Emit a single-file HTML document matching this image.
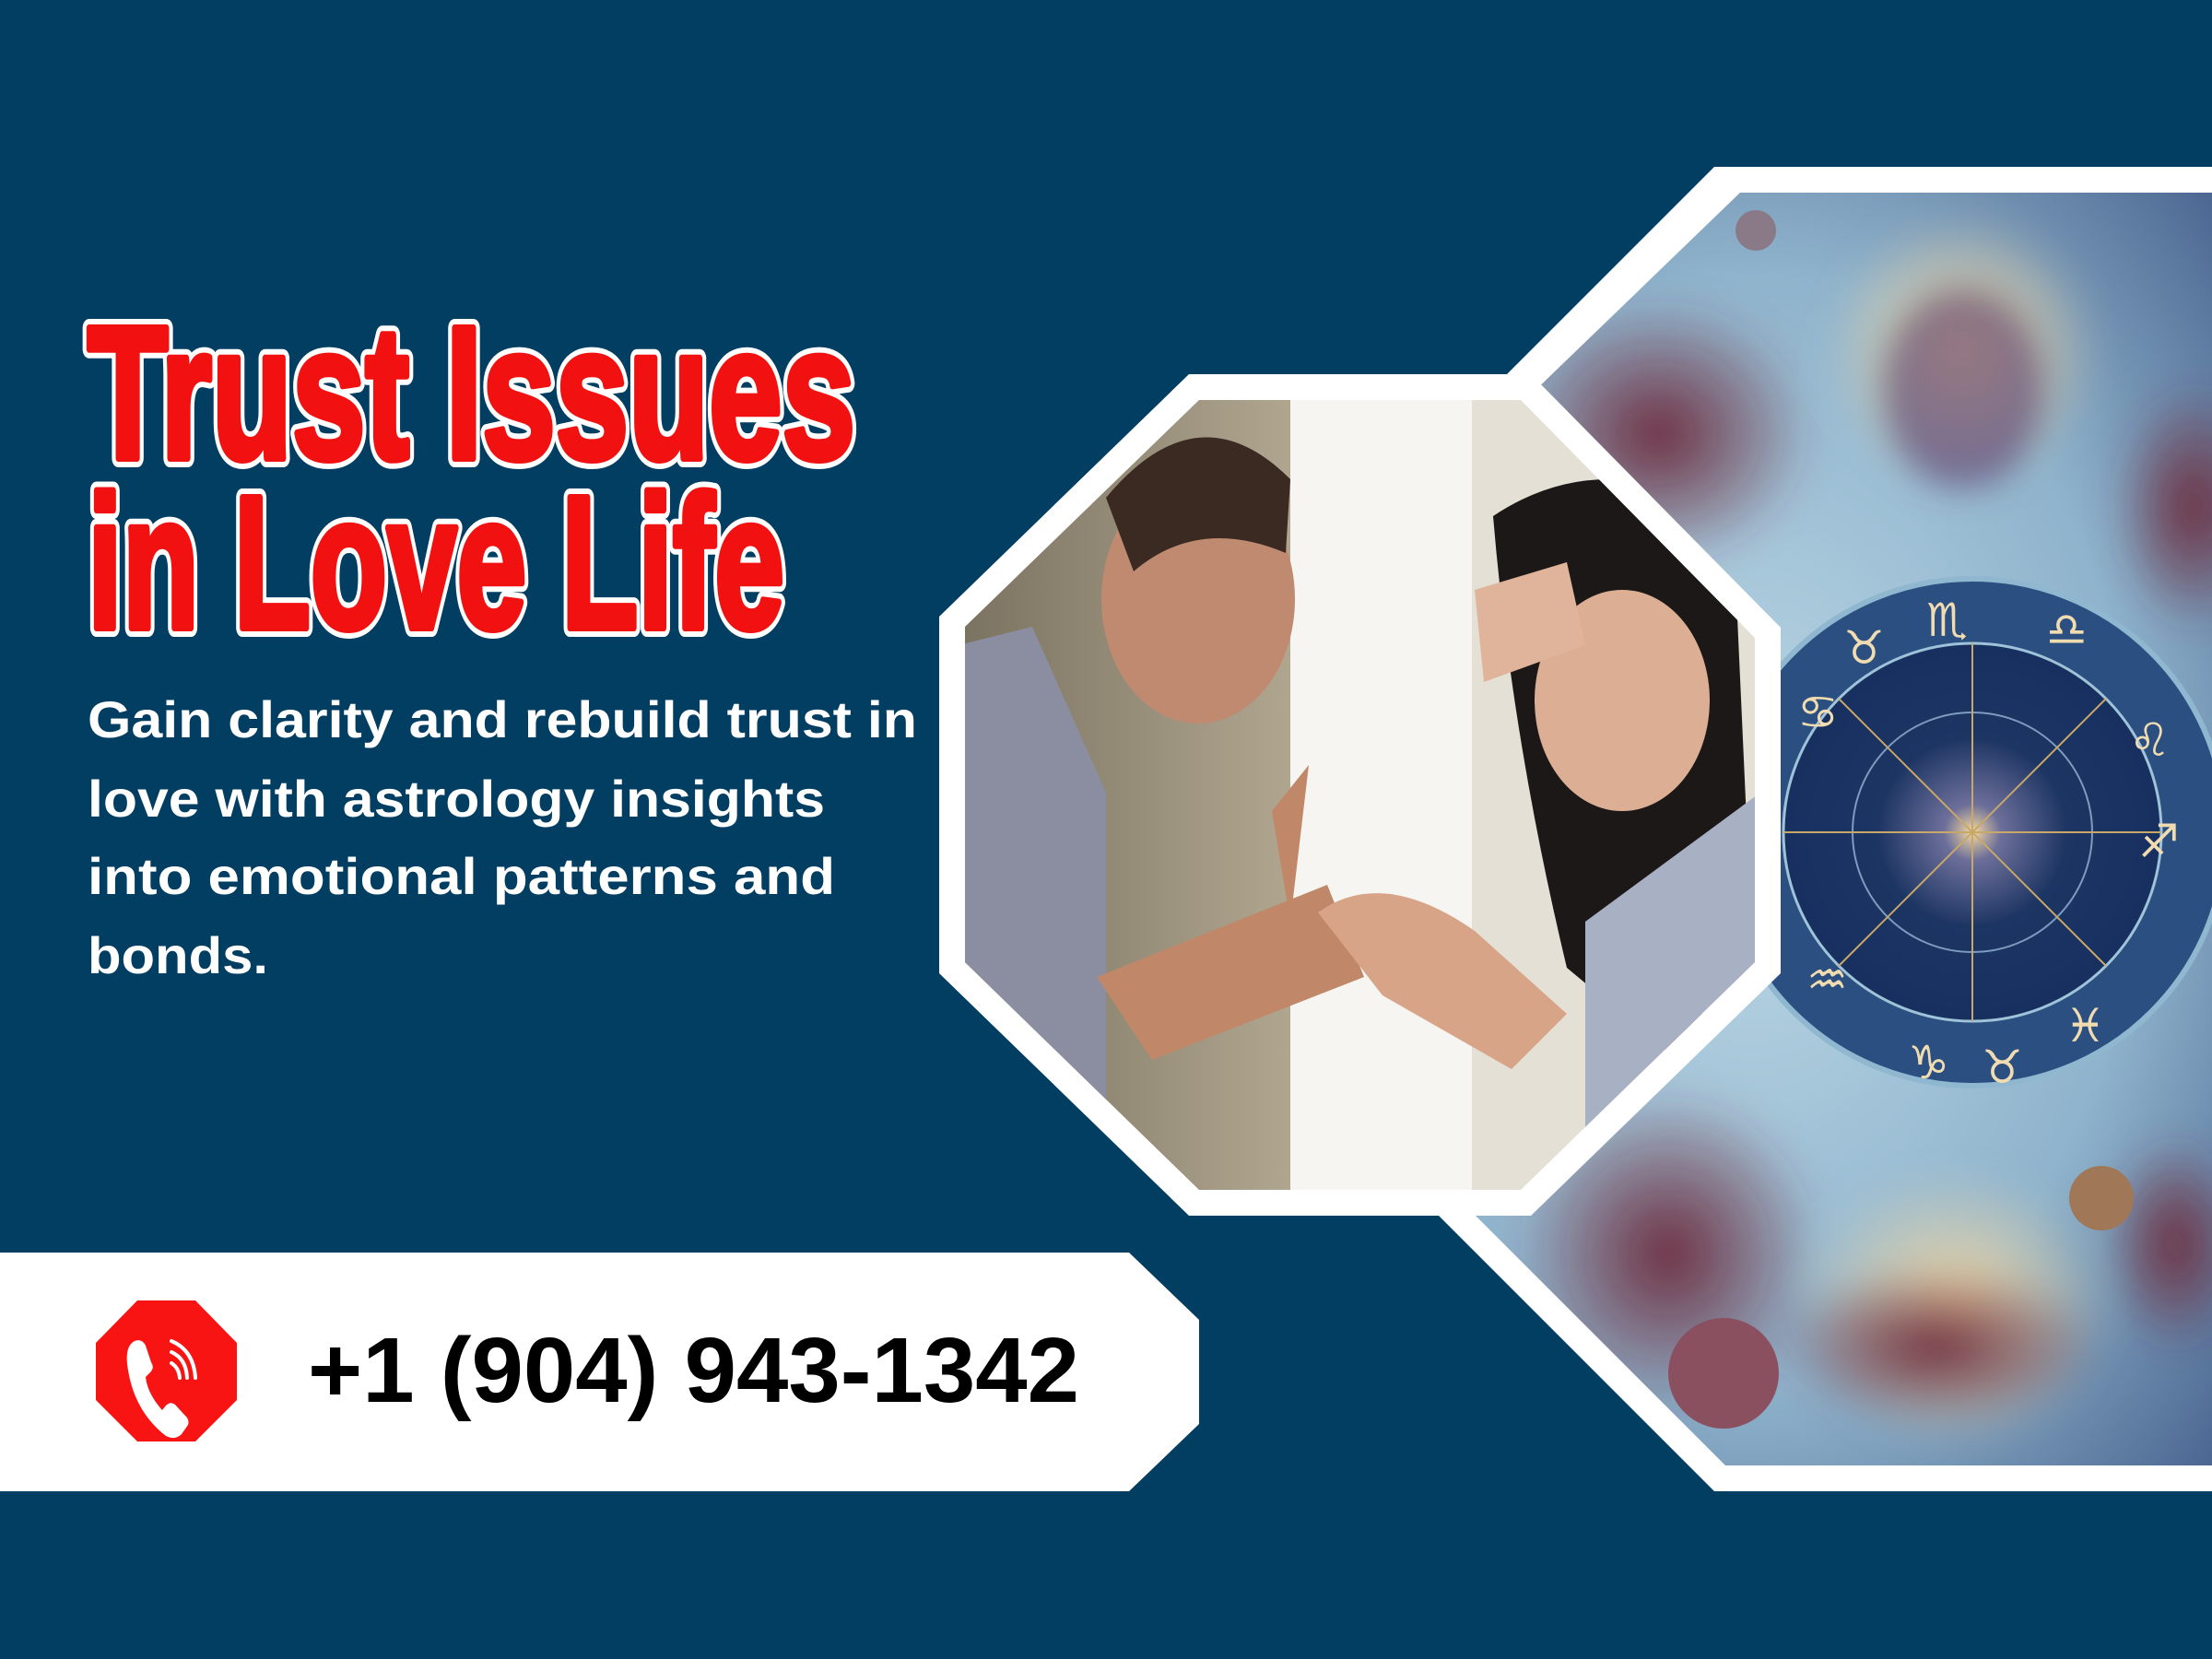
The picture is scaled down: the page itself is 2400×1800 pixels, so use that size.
<!DOCTYPE html>
<html><head><meta charset="utf-8"><style>
html,body{margin:0;padding:0;background:#023d62;}
svg{display:block}
</style></head><body>
<svg width="2400" height="1800" viewBox="0 0 2400 1800" xmlns="http://www.w3.org/2000/svg">
<defs>
<radialGradient id="cos" cx="0.5" cy="0.5" r="0.7">
<stop offset="0" stop-color="#bcd8e6"/><stop offset="0.6" stop-color="#8fb3cc"/><stop offset="1" stop-color="#4a6590"/>
</radialGradient>
<radialGradient id="wheel" cx="0.5" cy="0.5" r="0.5">
<stop offset="0" stop-color="#f4d8a0"/><stop offset="0.15" stop-color="#6d6f9a"/><stop offset="0.5" stop-color="#1d3563"/><stop offset="1" stop-color="#183060"/>
</radialGradient>
<radialGradient id="glow" cx="0.5" cy="0.5" r="0.5"><stop offset="0" stop-color="#f6d9a0"/><stop offset="1" stop-color="#f6d9a0" stop-opacity="0"/></radialGradient>
<radialGradient id="maroon" cx="0.5" cy="0.5" r="0.5"><stop offset="0" stop-color="#6e2f40"/><stop offset="1" stop-color="#6e2f40" stop-opacity="0"/></radialGradient>
<linearGradient id="wall" x1="0" y1="0" x2="1" y2="0"><stop offset="0" stop-color="#7a7260"/><stop offset="1" stop-color="#b0a690"/></linearGradient>
<clipPath id="cR"><polygon points="1888,209 2400,209 2400,1590 1872,1590 1428,1146 1428,653"/></clipPath>
<clipPath id="cM"><polygon points="1301,434 1650,434 1904,692 1904,1044 1650,1291 1301,1291 1047,1044 1047,680"/></clipPath>
<filter id="bl"><feGaussianBlur stdDeviation="18"/></filter>
</defs>
<rect width="2400" height="1800" fill="#023d62"/>

<polygon points="1860,181 2400,181 2400,1618 1860,1618 1400,1158 1400,641" fill="#fff"/>
<g clip-path="url(#cR)">
<rect x="1400" y="181" width="1000" height="1437" fill="url(#cos)"/>
<g filter="url(#bl)">
<ellipse cx="2130" cy="380" rx="150" ry="150" fill="url(#glow)"/>
<ellipse cx="2130" cy="420" rx="90" ry="110" fill="#5a3a6a" opacity="0.6"/>
<ellipse cx="1800" cy="470" rx="170" ry="150" fill="url(#maroon)"/>
<ellipse cx="1810" cy="1360" rx="170" ry="180" fill="url(#maroon)"/>
<ellipse cx="2120" cy="1420" rx="170" ry="150" fill="url(#glow)"/>
<ellipse cx="2100" cy="1460" rx="180" ry="90" fill="url(#maroon)"/>
<ellipse cx="2380" cy="550" rx="90" ry="140" fill="url(#maroon)"/>
<ellipse cx="2360" cy="1350" rx="80" ry="120" fill="url(#maroon)"/>
</g>
<circle cx="2140" cy="903" r="275" fill="#2a4f80" stroke="#8fb7cf" stroke-width="6"/>
<circle cx="2140" cy="903" r="205" fill="url(#wheel)" stroke="#9fc3d8" stroke-width="3"/>
<circle cx="2140" cy="903" r="130" fill="none" stroke="#7d9cc0" stroke-width="2"/>
<g stroke="#c8a868" stroke-width="2">
<line x1="1935" y1="903" x2="2345" y2="903"/><line x1="2140" y1="698" x2="2140" y2="1108"/>
<line x1="1995" y1="758" x2="2285" y2="1048"/><line x1="2285" y1="758" x2="1995" y2="1048"/>
</g>
<g fill="#f0dcb0" font-family="DejaVu Sans" font-size="50">
<text x="2090" y="690">♏</text><text x="2000" y="720">♉</text><text x="2220" y="700">♎</text><text x="1950" y="790">♋</text>
<text x="2310" y="820">♌</text><text x="2320" y="930">♐</text><text x="1960" y="1080">♒</text><text x="2070" y="1170">♑</text><text x="2150" y="1175">♉</text><text x="2240" y="1130">♓</text>
</g>
<circle cx="1905" cy="250" r="22" fill="#8a7a88"/>
<circle cx="1870" cy="1490" r="60" fill="#8a5060"/>
<circle cx="2280" cy="1300" r="35" fill="#a07858"/>
</g>

<polygon points="1290,406 1661,406 1932,681 1932,1056 1661,1319 1290,1319 1019,1056 1019,669" fill="#fff"/>
<g clip-path="url(#cM)">
<rect x="1040" y="430" width="360" height="870" fill="url(#wall)"/>
<rect x="1400" y="430" width="197" height="870" fill="#f6f5f2"/>
<rect x="1597" y="430" width="320" height="870" fill="#e4e0d6"/>
<path d="M1040,700 L1120,680 L1200,860 L1200,1300 L1040,1300 Z" fill="#8a8ea0"/>
<ellipse cx="1300" cy="650" rx="105" ry="135" fill="#c08a70"/>
<path d="M1200,540 Q1300,420 1400,520 L1395,600 Q1300,560 1230,620 Z" fill="#3a2a22"/>
<path d="M1190,1060 L1440,960 L1480,1060 L1250,1150 Z" fill="#c08868"/>
<path d="M1380,880 L1420,830 L1400,1000 Z" fill="#c08868"/>
<path d="M1620,560 Q1740,480 1880,560 L1900,1000 L1820,1150 L1700,1050 Q1640,800 1620,560 Z" fill="#1c1818"/>
<ellipse cx="1760" cy="760" rx="95" ry="120" fill="#dcae94"/>
<path d="M1600,640 L1700,610 L1720,700 L1610,740 Z" fill="#e0b49a"/>
<path d="M1720,1000 L1910,860 L1910,1300 L1720,1300 Z" fill="#a8b0c4"/>
<path d="M1430,990 Q1500,940 1600,1010 L1700,1100 L1640,1160 L1500,1080 Z" fill="#d8a488"/>
</g>

<g font-family="'Liberation Sans Narrow','Liberation Sans',sans-serif" font-weight="bold" font-size="205" stroke-linejoin="round">
<g fill="#fff" stroke="#fff" stroke-width="20">
<text x="95" y="497" textLength="833" lengthAdjust="spacingAndGlyphs">Trust Issues</text>
<text x="95" y="681" textLength="756" lengthAdjust="spacingAndGlyphs">in Love Life</text>
</g>
<g fill="#f21111" stroke="#f21111" stroke-width="8">
<text x="95" y="497" textLength="833" lengthAdjust="spacingAndGlyphs">Trust Issues</text>
<text x="95" y="681" textLength="756" lengthAdjust="spacingAndGlyphs">in Love Life</text>
</g>
</g>
<g font-family="'Liberation Sans',sans-serif" font-weight="bold" fill="#ffffff" font-size="56">
<text x="95" y="800" textLength="900" lengthAdjust="spacingAndGlyphs">Gain clarity and rebuild trust in</text>
<text x="95" y="886" textLength="800" lengthAdjust="spacingAndGlyphs">love with astrology insights</text>
<text x="95" y="970" textLength="811" lengthAdjust="spacingAndGlyphs">into emotional patterns and</text>
<text x="95" y="1056" textLength="196" lengthAdjust="spacingAndGlyphs">bonds.</text>
</g>

<polygon points="0,1359 1225,1359 1301,1432 1301,1545 1225,1618 0,1618" fill="#fff"/>
<polygon points="149,1411 212,1411 257,1457 257,1519 212,1564 149,1564 104,1519 104,1457" fill="#f91414"/>
<path d="M146,1455 Q136,1460 138,1480 Q144,1530 180,1558 Q190,1563 197,1556 L204,1546 Q206,1540 200,1535 L190,1524 Q185,1520 180,1525 L176,1530 Q160,1512 158,1494 L163,1489 Q168,1484 164,1478 L158,1460 Q154,1452 146,1455 Z" fill="#fff"/>
<g fill="none" stroke="#fff" stroke-width="4" stroke-linecap="round">
<path d="M186,1455 Q210,1465 212,1495"/><path d="M186,1467 Q202,1474 203,1495"/><path d="M186,1479 Q194,1484 195,1495"/>
</g>
<text x="334" y="1521" font-family="'Liberation Sans',sans-serif" font-weight="bold" font-size="100" fill="#000" textLength="837" lengthAdjust="spacingAndGlyphs">+1 (904) 943-1342</text>
</svg>
</body></html>
